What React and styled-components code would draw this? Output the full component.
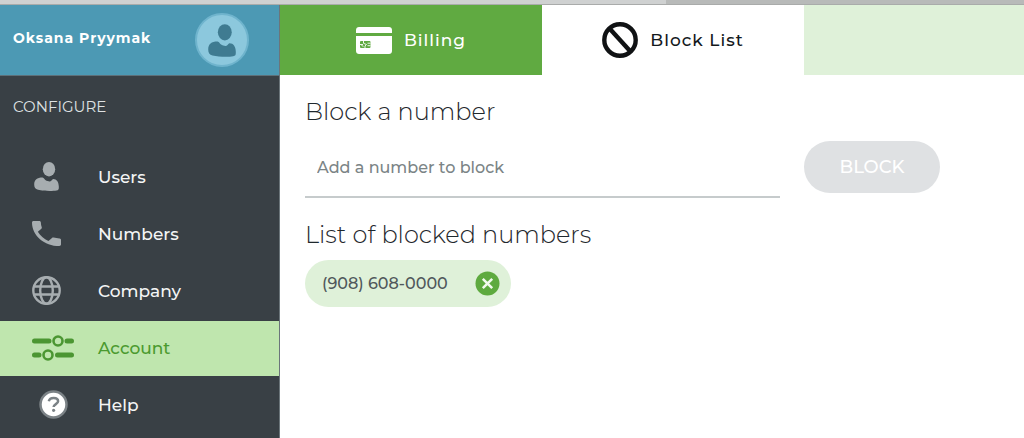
import React, { useState } from "react";
import styled, { createGlobalStyle } from "styled-components";

const GlobalStyle = createGlobalStyle`
  * {
    box-sizing: border-box;
  }
  body {
    margin: 0;
    background-color: #ffffff;
    font-family: Montserrat, Inter, "Noto Sans", sans-serif;
    color: #1f282d;
  }
  button,
  input {
    font-family: inherit;
  }
`;

const Page = styled.div`
  display: flex;
  flex-direction: column;
  min-height: 100vh;
`;

// window strip over the page
const Strip = styled.div`
  display: flex;
  flex: none;
  height: 5px;
  border-bottom: 1px solid #a9abaa;
  background-color: #b8bab9;
`;

const StripTab = styled.div`
  width: 65%;
  background-color: #cfd1d1;
`;

const Layout = styled.div`
  display: flex;
  flex: 1;
`;

// sidebar
const Sidebar = styled.aside`
  flex: none;
  width: 280px;
  border-right: 1px solid #6b757a;
  background-color: #394045;
`;

const Profile = styled.div`
  display: flex;
  align-items: center;
  justify-content: space-between;
  height: 71px;
  padding: 0 30px 0 13px;
  border-bottom: 1px solid #5d7079;
  background-color: #4c99b4;
`;

const ProfileName = styled.div`
  padding-bottom: 4px;
  color: #ffffff;
  font-size: 14px;
  font-weight: 700;
  letter-spacing: 1px;
`;

const Avatar = styled.div`
  display: flex;
  align-items: center;
  justify-content: center;
  width: 54px;
  height: 54px;
  border: 2px solid #6fb4cd;
  border-radius: 50%;
  background-color: #8cc8dd;
  color: #3f7b91;
`;

const MenuTitle = styled.h2`
  margin: 0;
  padding: 21px 13px 33px;
  color: #dfe2e3;
  font-size: 15px;
  font-weight: 400;
  line-height: 20px;
`;

const Menu = styled.nav`
  display: flex;
  flex-direction: column;
  gap: 2px;
`;

const MenuLink = styled.a`
  display: flex;
  align-items: center;
  height: 55px;
  padding: 0 0 2px 32px;
  background-color: ${({ $active }) => ($active ? "#bfe6ae" : "transparent")};
  color: ${({ $active }) => ($active ? "#4b9a2f" : "#f4f5f5")};
  font-size: 17px;
  font-weight: 500;
  text-decoration: none;
`;

const MenuIcon = styled.span`
  display: flex;
  flex: none;
  align-items: center;
  justify-content: ${({ $centered }) => ($centered ? "center" : "flex-start")};
  width: 42px;
  margin-right: 24px;
  color: ${({ $active }) => ($active ? "#4b9632" : "#a7adb0")};
`;

// main
const Main = styled.main`
  flex: 1;
  min-width: 0;
`;

const Tabs = styled.div`
  display: flex;
  height: 70px;
  background-color: #dff1d9;
`;

const Tab = styled.button`
  display: flex;
  flex: none;
  align-items: center;
  justify-content: center;
  gap: 12px;
  width: 262px;
  padding: 0;
  border: none;
  background-color: ${({ $active }) => ($active ? "#ffffff" : "#60aa41")};
  color: ${({ $active }) => ($active ? "#14191c" : "#ffffff")};
  font-size: 17px;
  font-weight: 500;
  letter-spacing: 1px;
`;

const Content = styled.div`
  padding: 20px 84px 24px 25px;
`;

const Heading = styled.h2`
  margin: 0;
  font-size: 24px;
  font-weight: 300;
  line-height: 34px;
`;

const BlockForm = styled.form`
  display: flex;
  align-items: flex-start;
  gap: 24px;
  margin-bottom: 20px;
`;

const NumberInput = styled.input`
  flex: 1;
  min-width: 0;
  height: 69px;
  padding: 10px 12px 0;
  border: none;
  border-bottom: 2px solid #c6cbcc;
  outline: none;
  background-color: transparent;
  color: #1f282d;
  font-size: 16px;
  font-weight: 500;

  &::placeholder {
    color: #7b8486;
    opacity: 1;
  }
`;

const BlockButton = styled.button`
  width: 136px;
  height: 52px;
  margin-top: 12px;
  border: none;
  border-radius: 26px;
  background-color: #dfe1e3;
  color: #ffffff;
  font-size: 18px;
  font-weight: 500;
`;

const BlockedList = styled.ul`
  display: flex;
  flex-wrap: wrap;
  gap: 12px;
  margin: 8px 0 0;
  padding: 0;
  list-style: none;
`;

const Chip = styled.li`
  display: flex;
  align-items: center;
  justify-content: space-between;
  width: 206px;
  height: 47px;
  padding: 0 11px 0 17px;
  border-radius: 24px;
  background-color: #dff1d9;
  color: #50585b;
  font-size: 16px;
  font-weight: 500;
`;

const RemoveButton = styled.button`
  display: flex;
  padding: 0;
  border: none;
  background: none;
`;

function PersonIcon({ width, height }) {
  return (
    <svg width={width} height={height} viewBox="0 0 25 29" fill="currentColor">
      <ellipse cx="15" cy="7.200" rx="6.200" ry="7.200" />
      <path d="M8.500 15.500c1.500 0 2.200 3 5 3.400.8-.1 1.600.8 2.600.5 1.800-.6 2.300-2.400 3.200-2.400 3.400 0 5.300 3 5.500 7.200.1 2.800.1 4-2.300 4.300-4.500.8-13 .6-18.500-.7C1.300 27.100.2 25.600.2 22.500c0-4.700 2.800-7 8.300-7z" />
    </svg>
  );
}

function PhoneIcon() {
  return (
    <svg width="29" height="25" viewBox="3 3 18 18" preserveAspectRatio="none" fill="currentColor">
      <path d="M6.620 10.790c1.440 2.830 3.760 5.140 6.590 6.590l2.200-2.200c.27-.27.67-.36 1.020-.24 1.120.37 2.330.57 3.570.57.55 0 1 .45 1 1V20c0 .55-.45 1-1 1-9.390 0-17-7.610-17-17 0-.55.45-1 1-1h3.500c.55 0 1 .45 1 1 0 1.250.2 2.450.57 3.570.11.35.03.74-.25 1.020l-2.200 2.200z" />
    </svg>
  );
}

function GlobeIcon() {
  return (
    <svg width="29" height="29" viewBox="0 0 29 29" fill="none" stroke="currentColor" strokeWidth="2.400">
      <circle cx="14.500" cy="14.500" r="13.200" />
      <ellipse cx="14.500" cy="14.500" rx="6.300" ry="13.200" />
      <path d="M2.500 10.500h24M2.500 18.500h24" />
    </svg>
  );
}

function SlidersIcon() {
  return (
    <svg width="42" height="26" viewBox="0 0 42 26" fill="none" stroke="currentColor">
      <path strokeWidth="5" strokeLinecap="round" d="M2.500 6H17M35 6h4.500M2.500 20H7M25.500 20h14" />
      <circle cx="26" cy="6" r="4.500" strokeWidth="2.600" />
      <circle cx="16" cy="20" r="4.500" strokeWidth="2.600" />
    </svg>
  );
}

function HelpIcon() {
  return (
    <svg width="29" height="29" viewBox="0 0 29 29" fill="none">
      <circle cx="14.500" cy="14.500" r="13" fill="#ffffff" stroke="#7b8286" strokeWidth="2.500" />
      <path d="M9.800 11.300c.5-2.300 2.300-3.400 4.900-3.400 2.800 0 4.400 1.300 4.400 3.300 0 2.900-4.500 3-4.500 5.900" stroke="#7b8286" strokeWidth="2.500" />
      <circle cx="14.600" cy="20.300" r="1.600" fill="#7b8286" />
    </svg>
  );
}

function CardIcon() {
  return (
    <svg width="36" height="27" viewBox="0 0 36 27">
      <path fill="#ffffff" d="M3 0h30c1.700 0 3 1.300 3 3v3H0V3c0-1.700 1.300-3 3-3z" />
      <path fill="#ffffff" d="M0 9h36v15c0 1.700-1.300 3-3 3H3c-1.700 0-3-1.300-3-3z" />
      <rect x="4" y="14" width="10.500" height="7" rx="1" fill="#60aa41" />
      <path d="M4 17.500h3M11.500 16.200h3M11.500 18.700h3M7.500 14v2.300l3 1.200-1.500 1.500V21M5.500 18.500l2 .8" fill="none" stroke="#ffffff" strokeWidth=".9" />
    </svg>
  );
}

function BanIcon() {
  return (
    <svg width="36" height="36" viewBox="0 0 36 36" fill="none" stroke="#101214" strokeWidth="4.400">
      <circle cx="18" cy="18" r="15.700" />
      <path d="M8 7l20 22" />
    </svg>
  );
}

function RemoveIcon() {
  return (
    <svg width="25" height="25" viewBox="0 0 25 25">
      <circle cx="12.500" cy="12.500" r="12" fill="#5eaa3f" />
      <path d="M7.800 7.800l9.400 9.400M17.200 7.800l-9.400 9.400" stroke="#f2faee" strokeWidth="2.500" />
    </svg>
  );
}

const menuItems = [
  { name: "Users", icon: <PersonIcon width={29} height={29} /> },
  { name: "Numbers", icon: <PhoneIcon /> },
  { name: "Company", icon: <GlobeIcon /> },
  { name: "Account", icon: <SlidersIcon />, active: true },
  { name: "Help", icon: <HelpIcon />, centered: true },
];

function App() {
  const [number, setNumber] = useState("");
  const [blocked, setBlocked] = useState(["(908) 608-0000"]);

  const handleSubmit = (e) => {
    e.preventDefault();
    if (!number) return;
    setBlocked([...blocked, number]);
    setNumber("");
  };

  const handleRemove = (item) => {
    setBlocked(blocked.filter((b) => b !== item));
  };

  return (
    <Page>
      <GlobalStyle />
      <Strip>
        <StripTab />
      </Strip>
      <Layout>
        <Sidebar>
          <Profile>
            <ProfileName>Oksana Pryymak</ProfileName>
            <Avatar>
              <PersonIcon width={28} height={33} />
            </Avatar>
          </Profile>
          <MenuTitle>CONFIGURE</MenuTitle>
          <Menu>
            {menuItems.map(({ name, icon, active, centered }) => (
              <MenuLink key={name} href="#" $active={active}>
                <MenuIcon $active={active} $centered={centered}>
                  {icon}
                </MenuIcon>
                {name}
              </MenuLink>
            ))}
          </Menu>
        </Sidebar>
        <Main>
          <Tabs role="tablist">
            <Tab type="button" role="tab" aria-selected="false">
              <CardIcon />
              Billing
            </Tab>
            <Tab type="button" role="tab" aria-selected="true" $active>
              <BanIcon />
              Block List
            </Tab>
          </Tabs>
          <Content>
            <Heading>Block a number</Heading>
            <BlockForm onSubmit={handleSubmit}>
              <NumberInput
                type="tel"
                name="number"
                aria-label="Add a number to block"
                value={number}
                placeholder="Add a number to block"
                onChange={(e) => setNumber(e.target.value)}
              />
              <BlockButton type="submit">BLOCK</BlockButton>
            </BlockForm>
            <Heading>List of blocked numbers</Heading>
            <BlockedList>
              {blocked.map((item) => (
                <Chip key={item}>
                  {item}
                  <RemoveButton
                    type="button"
                    aria-label={`Unblock ${item}`}
                    onClick={() => handleRemove(item)}
                  >
                    <RemoveIcon />
                  </RemoveButton>
                </Chip>
              ))}
            </BlockedList>
          </Content>
        </Main>
      </Layout>
    </Page>
  );
}

export default App;
